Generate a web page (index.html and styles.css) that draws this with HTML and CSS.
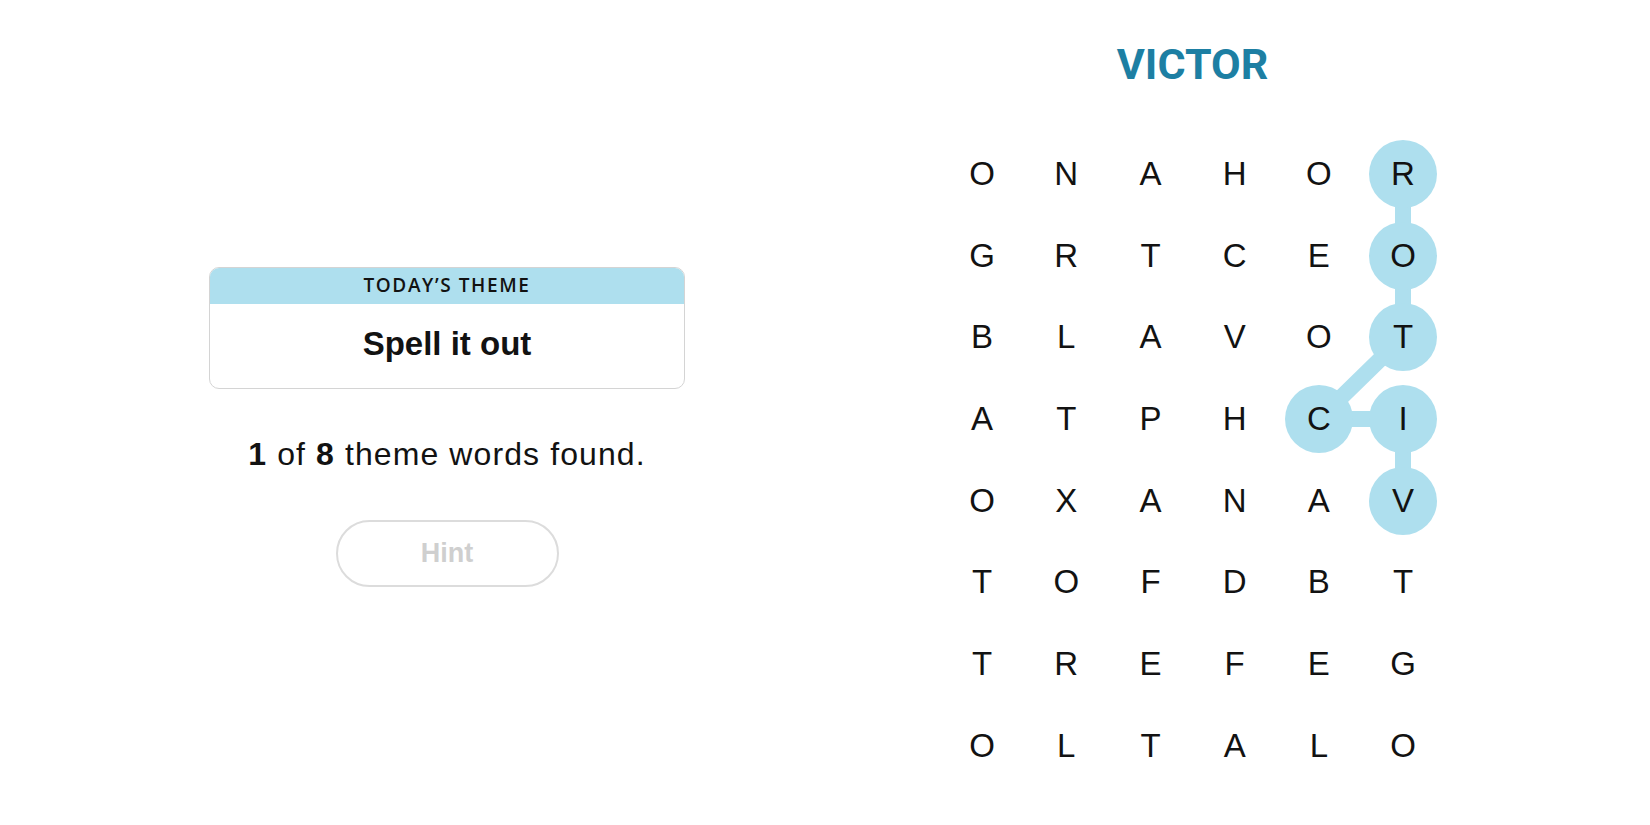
FILE: index.html
```html
<!DOCTYPE html>
<html>
<head>
<meta charset="utf-8">
<title>Strands</title>
<link rel="stylesheet" href="styles.css">
</head>
<body>
<main class="page">
  <section class="left">
    <div class="theme-card">
      <div class="theme-head">TODAY’S THEME</div>
      <div class="theme-body">Spell it out</div>
    </div>
    <p class="progress"><b>1</b> of <b>8</b> theme words found.</p>
    <button class="hint" disabled>Hint</button>
  </section>
  <section class="right">
    <h1 class="word">VICTOR</h1>
    <div class="board">
      <svg class="links" width="505" height="654" viewBox="0 0 505 654">
        <g stroke="#aedfee" stroke-width="16" stroke-linecap="round" fill="none">
          <line x1="463" y1="41" x2="463" y2="204"/>
          <line x1="463" y1="204" x2="379" y2="286"/>
          <line x1="379" y1="286" x2="463" y2="286"/>
          <line x1="463" y1="286" x2="463" y2="368"/>
        </g>
      </svg>
      <div class="grid">
        <span class="cell">O</span><span class="cell">N</span><span class="cell">A</span><span class="cell">H</span><span class="cell">O</span><span class="cell sel">R</span>
        <span class="cell">G</span><span class="cell">R</span><span class="cell">T</span><span class="cell">C</span><span class="cell">E</span><span class="cell sel">O</span>
        <span class="cell">B</span><span class="cell">L</span><span class="cell">A</span><span class="cell">V</span><span class="cell">O</span><span class="cell sel">T</span>
        <span class="cell">A</span><span class="cell">T</span><span class="cell">P</span><span class="cell">H</span><span class="cell sel">C</span><span class="cell sel">I</span>
        <span class="cell">O</span><span class="cell">X</span><span class="cell">A</span><span class="cell">N</span><span class="cell">A</span><span class="cell sel">V</span>
        <span class="cell">T</span><span class="cell">O</span><span class="cell">F</span><span class="cell">D</span><span class="cell">B</span><span class="cell">T</span>
        <span class="cell">T</span><span class="cell">R</span><span class="cell">E</span><span class="cell">F</span><span class="cell">E</span><span class="cell">G</span>
        <span class="cell">O</span><span class="cell">L</span><span class="cell">T</span><span class="cell">A</span><span class="cell">L</span><span class="cell">O</span>
      </div>
    </div>
  </section>
</main>
</body>
</html>
```
FILE: styles.css
```css
html, body {
  margin: 0;
  padding: 0;
  background: #ffffff;
}
body {
  font-family: "Liberation Sans", Arial, sans-serif;
  color: #121212;
  width: 1650px;
  height: 825px;
  overflow: hidden;
}
.page {
  display: flex;
  width: 1650px;
  height: 825px;
}
.left {
  width: 894px;
  display: flex;
  flex-direction: column;
  align-items: center;
  padding-top: 267px;
  box-sizing: border-box;
}
.theme-card {
  width: 476px;
  height: 122px;
  box-sizing: border-box;
  border: 1px solid #d4d4d4;
  border-radius: 10px;
  overflow: hidden;
  display: flex;
  flex-direction: column;
}
.theme-head {
  background: #aedfee;
  height: 36px;
  display: flex;
  align-items: center;
  justify-content: center;
  font-family: "Open Sans", "Liberation Sans", sans-serif;
  font-weight: 600;
  font-size: 19px;
  letter-spacing: 1.6px;
  color: #121212;
  padding-bottom: 2px;
  box-sizing: border-box;
}
.theme-body {
  flex: 1;
  display: flex;
  align-items: center;
  justify-content: center;
  font-weight: bold;
  font-size: 33px;
  padding-bottom: 4px;
}
.progress {
  margin: 0;
  margin-top: 45px;
  font-size: 32px;
  letter-spacing: 1.1px;
  line-height: 40px;
  color: #121212;
}
.progress b {
  font-weight: bold;
}
.hint {
  margin-top: 46px;
  width: 223px;
  height: 67px;
  border: 2px solid #dcdcdc;
  border-radius: 34px;
  background: #fff;
  color: #cfcfcf;
  font-family: "Liberation Sans", Arial, sans-serif;
  font-weight: bold;
  font-size: 27px;
  padding: 0;
}
.right {
  width: 597px;
  display: flex;
  flex-direction: column;
  align-items: center;
}
.word {
  margin: 0;
  margin-top: 38px;
  font-family: Roboto, "Liberation Sans", sans-serif;
  font-weight: bold;
  font-size: 43px;
  line-height: 52px;
  letter-spacing: 0px;
  color: #1d7fa3;
  height: 52px;
}
.board {
  position: relative;
  margin-top: 43px;
  width: 505px;
  height: 654px;
}
.links {
  position: absolute;
  left: 0;
  top: 0;
}
.grid {
  position: relative;
  z-index: 1;
  display: grid;
  grid-template-columns: repeat(6, 84.2px);
  grid-template-rows: repeat(8, 81.7px);
}
.cell {
  display: flex;
  align-items: center;
  justify-content: center;
  font-size: 33px;
  color: #121212;
  position: relative;
}
.cell.sel::before {
  content: "";
  position: absolute;
  width: 68px;
  height: 68px;
  border-radius: 50%;
  background: #aedfee;
  left: 50%;
  top: 50%;
  transform: translate(-50%, -50%);
  z-index: -1;
}
```
